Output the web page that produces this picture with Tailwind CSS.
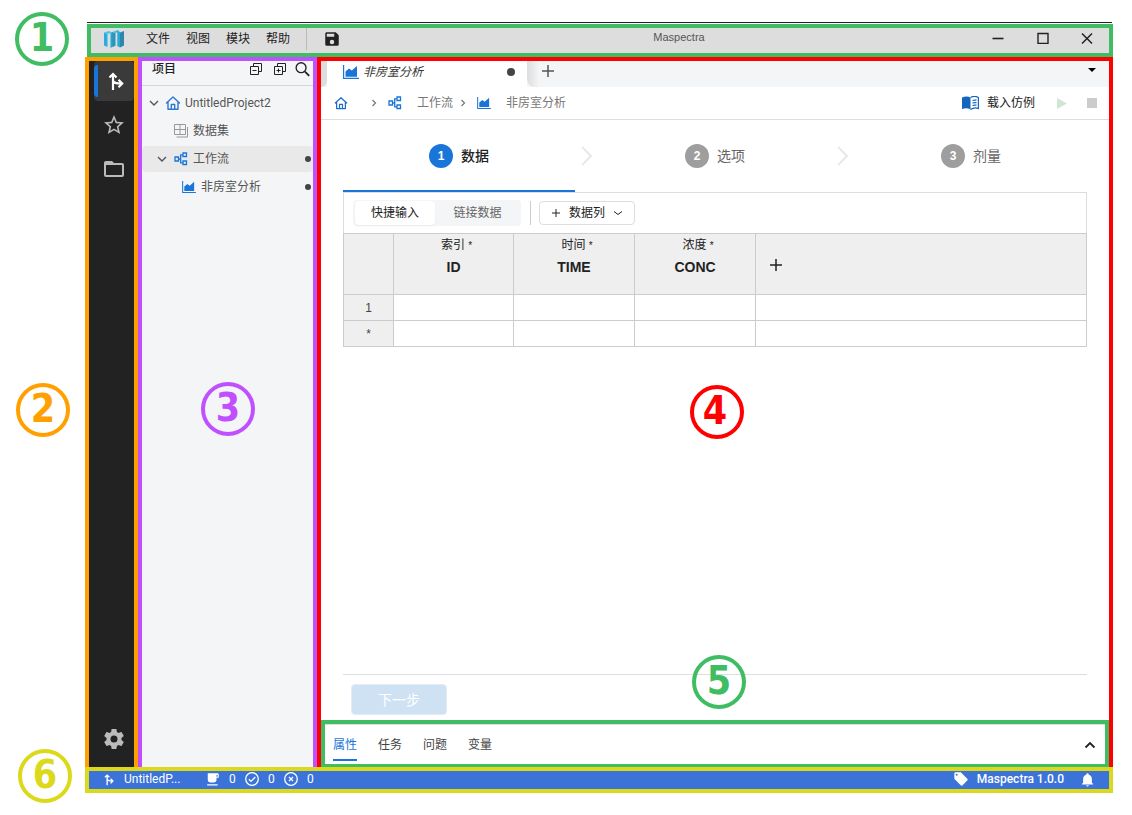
<!DOCTYPE html>
<html lang="zh-CN">
<head>
<meta charset="utf-8">
<meta name="viewport" content="width=device-width, initial-scale=1">
<title>Maspectra</title>
<script src="https://cdn.jsdelivr.net/npm/@tailwindcss/browser@4"></script>
</head>
<body class="bg-white font-['Liberation_Sans','Noto_Sans_CJK_SC',sans-serif] text-xs text-[#222]">

<svg class="hidden" aria-hidden="true">
  <symbol id="branch" viewBox="0 0 16 20"><path d="M5 19V4M1.500 6.500L5 3l3.500 3.500M5 9.500c.5 2.500 2.500 3 8 3M10.500 8.800l3.700 3.700-3.700 3.700" fill="none" stroke="currentColor" stroke-width="2.200"/></symbol>
  <symbol id="home" viewBox="0 0 16 16"><path d="M1.500 8L8 2l6.500 6M3 7v7.300h10V7M6.300 14V9.500h3.400V14" fill="none" stroke="currentColor" stroke-width="1.400" stroke-linejoin="round" stroke-linecap="round"/></symbol>
  <symbol id="flow" viewBox="0 0 14 14"><path d="M1 5h3.500v4H1zM9 1h3.500v3.500H9zM9 9h3.500v3.500H9zM4.500 7h2M9 2.800H6.700v8H9" fill="none" stroke="currentColor" stroke-width="1.300"/></symbol>
  <symbol id="chart" viewBox="0 0 16 14"><path d="M.6 0v13.400H16" fill="none" stroke="currentColor" stroke-width="1.200"/><path d="M2.500 11.800V6.500L6 3.500l2.800 2L14 1v10.800z" fill="currentColor"/></symbol>
  <symbol id="down" viewBox="0 0 12 12"><path d="M2 4l4 4 4-4" fill="none" stroke="currentColor" stroke-width="1.400"/></symbol>
  <symbol id="right" viewBox="0 0 12 12"><path d="M4.500 3l3 3-3 3" fill="none" stroke="currentColor" stroke-width="1.200"/></symbol>
  <symbol id="plus" viewBox="0 0 12 12"><path d="M6 0v12M0 6h12" fill="none" stroke="currentColor" stroke-width="1.500"/></symbol>
  <symbol id="step" viewBox="0 0 24 24"><path d="M7 3l9 9-9 9" fill="none" stroke="currentColor" stroke-width="2"/></symbol>
</svg>

<div class="relative flex min-h-screen flex-col pt-[22px] pr-[19px] pb-[22px] pl-[85px]">

  <header class="ml-0.5 flex flex-col">
    <div class="mr-px h-px bg-[#222]"></div>
    <div class="mt-px flex h-[33px] items-stretch border-4 border-[#40bc63] bg-[#ddd]">
      <svg class="mt-0.5 ml-[13px] h-[18px] w-5 shrink-0" viewBox="0 0 20 18" aria-label="Maspectra">
        <path d="M0 2.500L3.500 4v13L0 15.500z" fill="#27aee0"/><path d="M0 2.500L5 1l3 1.500L3.500 4z" fill="#4cc4ea"/>
        <path d="M6.500 3L9 1.800v14.700L6.500 18z" fill="#1fa8d4"/><path d="M8.500 2L11.500 3v12.800L8.500 17z" fill="#3192b8"/>
        <path d="M8.500 2L14 0l1.500 1.500-4 1.500z" fill="#38bde5"/>
        <path d="M13.300 1L16 2v15.500l-2.700-1.500z" fill="#28a9d6"/><path d="M16 2.500L20 1v14.500l-4 2z" fill="#2d86ac"/>
      </svg>
      <nav class="ml-[22px] flex items-center gap-4 pb-1">
        <button type="button">文件</button><button type="button">视图</button><button type="button">模块</button><button type="button">帮助</button>
      </nav>
      <div class="ml-4 h-[22px] w-px bg-[#bbb]"></div>
      <button type="button" aria-label="保存" class="ml-4 flex items-center pb-1"><svg class="size-[18px]" viewBox="0 0 24 24"><path fill="currentColor" d="M15,9H5V5H15M12,19A3,3 0 0,1 9,16A3,3 0 0,1 12,13A3,3 0 0,1 15,16A3,3 0 0,1 12,19M17,3H5C3.89,3 3,3.9 3,5V19A2,2 0 0,0 5,21H19A2,2 0 0,0 21,19V7L17,3Z"/></svg></button>
      <h1 class="flex-1 pl-[42px] text-center text-[11px] leading-[18px] text-[#555]">Maspectra</h1>
      <div class="flex shrink-0 items-center pb-1.5">
        <button type="button" aria-label="最小化" class="flex w-[45px] justify-center"><svg class="size-3" viewBox="0 0 12 12"><path d="M.5 6.500h11" stroke="#222" stroke-width="1.600"/></svg></button>
        <button type="button" aria-label="最大化" class="flex w-[45px] justify-center"><svg class="size-3" viewBox="0 0 12 12"><path d="M1 1.500h10v10H1z" fill="none" stroke="#222" stroke-width="1.400"/></svg></button>
        <button type="button" aria-label="关闭" class="flex w-11 justify-center"><svg class="size-3" viewBox="0 0 12 12"><path d="M1 1.500l10 10M11 1.500l-10 10" stroke="#222" stroke-width="1.500"/></svg></button>
      </div>
    </div>
  </header>

  <div class="flex flex-1 items-stretch">
    <!-- activity rail -->
    <nav class="flex w-[53px] shrink-0 flex-col items-center border-4 border-b-0 border-[#ffa000] bg-[#222] pl-1 text-[#bbb]">
      <button type="button" aria-label="项目" class="flex h-10 w-10 items-center rounded bg-[#3a3a3a] text-white"><span class="h-8 w-1 rounded-l-sm bg-[#1976d8]"></span><svg class="ml-2.5 h-5 w-4"><use href="#branch"/></svg></button>
      <button type="button" aria-label="收藏" class="mt-3 size-6"><svg viewBox="0 0 24 24"><path fill="currentColor" d="M12,15.39L8.24,17.66L9.23,13.38L5.91,10.5L10.29,10.13L12,6.09L13.71,10.13L18.09,10.5L14.77,13.38L15.76,17.66M22,9.24L14.81,8.63L12,2L9.19,8.63L2,9.24L7.45,13.97L5.82,21L12,17.27L18.18,21L16.54,13.97L22,9.24Z"/></svg></button>
      <button type="button" aria-label="文件夹" class="mt-5 size-6"><svg viewBox="0 0 24 24"><path fill="currentColor" d="M20,18H4V8H20M20,6H12L10,4H4C2.89,4 2,4.89 2,6V18A2,2 0 0,0 4,20H20A2,2 0 0,0 22,18V8C22,6.89 21.1,6 20,6Z"/></svg></button>
      <button type="button" aria-label="设置" class="mt-auto mb-4 size-6"><svg viewBox="0 0 24 24"><path fill="currentColor" d="M12,15.5A3.5,3.5 0 0,1 8.5,12A3.5,3.5 0 0,1 12,8.500A3.5,3.5 0 0,1 15.5,12A3.5,3.5 0 0,1 12,15.5M19.43,12.97C19.47,12.65 19.5,12.33 19.5,12C19.5,11.67 19.47,11.34 19.43,11L21.54,9.37C21.73,9.22 21.78,8.95 21.66,8.73L19.66,5.27C19.54,5.05 19.27,4.96 19.05,5.05L16.56,6.05C16.04,5.66 15.5,5.32 14.87,5.07L14.5,2.42C14.46,2.18 14.25,2 14,2H10C9.75,2 9.54,2.18 9.5,2.42L9.13,5.07C8.5,5.32 7.96,5.66 7.44,6.05L4.95,5.05C4.73,4.96 4.46,5.05 4.34,5.27L2.34,8.73C2.21,8.95 2.27,9.22 2.46,9.37L4.57,11C4.53,11.34 4.5,11.67 4.5,12C4.5,12.33 4.53,12.65 4.57,12.97L2.46,14.63C2.27,14.78 2.21,15.05 2.34,15.27L4.34,18.73C4.46,18.95 4.73,19.03 4.95,18.95L7.44,17.94C7.96,18.34 8.5,18.68 9.13,18.93L9.5,21.58C9.54,21.82 9.75,22 10,22H14C14.25,22 14.46,21.82 14.5,21.58L14.87,18.93C15.5,18.67 16.04,18.34 16.56,17.94L19.05,18.95C19.27,19.03 19.54,18.95 19.66,18.73L21.66,15.27C21.78,15.05 21.73,14.78 21.54,14.63L19.43,12.97Z"/></svg></button>
    </nav>

    <!-- project tree -->
    <aside class="w-[179px] shrink-0 border-4 border-b-0 border-[#c050ff] bg-[#f4f5f7] text-[#555]">
      <div class="flex h-[25px] items-start border-b border-[#d5d5d5] pl-2.5 text-[#222]">
        <h2 class="mr-auto leading-4 font-medium">项目</h2>
        <button type="button" aria-label="全部折叠" class="mt-0.5 mr-3"><svg class="size-3" viewBox="0 0 12 12"><path d="M.5 3.500h8v8h-8zM3.500 3.500v-3h8v8h-3M2.500 7.500h4" fill="none" stroke="currentColor"/></svg></button>
        <button type="button" aria-label="全部展开" class="mt-0.5 mr-2"><svg class="size-3" viewBox="0 0 12 12"><path d="M.5 3.500h8v8h-8zM3.500 3.500v-3h8v8h-3M2.500 7.500h4M4.500 5.500v4" fill="none" stroke="currentColor"/></svg></button>
        <button type="button" aria-label="搜索" class="mr-0.5"><svg class="size-[17px]" viewBox="0 0 24 24"><path d="M15.500 15l6 6" stroke="currentColor" stroke-width="2.600"/><circle cx="10" cy="9.500" r="7" fill="none" stroke="currentColor" stroke-width="1.900"/></svg></button>
      </div>
      <ul class="mt-1 flex flex-col gap-0.5">
        <li class="flex h-[26px] items-center pl-1.5"><svg class="size-3"><use href="#down"/></svg><svg class="ml-[5px] size-4 text-[#2f78cf]"><use href="#home"/></svg><span class="ml-1 font-['Roboto','Liberation_Sans',sans-serif]">UntitledProject2</span></li>
        <li class="flex h-[26px] items-center pl-8"><svg class="size-[14px] text-[#999]" viewBox="0 0 14 14"><path d="M.5 .5h11v10H.5zM6 .5v10M.5 5.500h11M2.500 13h11V3" fill="none" stroke="currentColor"/></svg><span class="ml-[5px]">数据集</span></li>
        <li class="flex h-[26px] items-center rounded bg-[#e9e9e9] pr-0.5 pl-3.5"><svg class="size-3"><use href="#down"/></svg><svg class="ml-1.5 size-[14px] text-[#1976d8]"><use href="#flow"/></svg><span class="ml-[5px]">工作流</span><span class="ml-auto size-1.5 rounded-full bg-[#444]"></span></li>
        <li class="flex h-[26px] items-center pr-0.5 pl-10"><svg class="h-3 w-[14px] text-[#1976d8]"><use href="#chart"/></svg><span class="ml-[5px]">非房室分析</span><span class="ml-auto size-1.5 rounded-full bg-[#444]"></span></li>
      </ul>
    </aside>

    <!-- editor -->
    <main class="flex min-w-0 flex-1 flex-col border-4 border-b-0 border-[#f00]">
      <div class="flex h-[26px] shrink-0 bg-[#f4f5f7]">
        <div class="w-1.5 rounded-br-md bg-[#ddd]"></div>
        <div class="flex w-[200px] items-start bg-white pt-1 pr-3 pl-4 text-[#333]">
          <svg class="h-[14px] w-4 text-[#1976d8]"><use href="#chart"/></svg><span class="ml-1 leading-[14px] italic">非房室分析</span><span class="mt-[3px] ml-auto size-2 rounded-full bg-[#444]"></span>
        </div>
        <div class="w-3 rounded-bl-lg bg-linear-to-r from-[#ddd] to-[#f4f5f7]"></div>
        <button type="button" aria-label="新建标签" class="ml-[3px] flex pt-1 text-[#555]"><svg class="size-3"><use href="#plus"/></svg></button>
        <button type="button" aria-label="标签列表" class="mr-[13px] ml-auto flex pt-[7px]"><svg class="h-1 w-2" viewBox="0 0 8 4"><path d="M0 0h8L4 4z"/></svg></button>
      </div>
      <div class="flex h-[33px] shrink-0 items-center border-b border-[#ddd] pl-[13px] text-[#777]">
        <a href="#" aria-label="主页" class="text-[#1f6cc8]"><svg class="size-[14px]"><use href="#home"/></svg></a>
        <svg class="ml-5 size-3"><use href="#right"/></svg>
        <svg class="ml-2 size-[14px] text-[#1976d8]"><use href="#flow"/></svg>
        <a href="#" class="ml-[15px]">工作流</a>
        <svg class="ml-1 size-3"><use href="#right"/></svg>
        <svg class="ml-2 h-3 w-[14px] text-[#1976d8]"><use href="#chart"/></svg>
        <a href="#" class="ml-[15px]">非房室分析</a>
        <button type="button" class="ml-auto flex items-center gap-2 text-[#222]"><svg class="h-[14px] w-[17px]" viewBox="0 0 17 14"><path d="M0 1.500C3 0 6 0 8.500 1.500v12C6 12 3 12 0 13z" fill="#1565c0"/><path d="M8.500 1.500C11 0 14 0 16.400 1.500v11C14 11.500 11 11.800 8.500 13.500M10.500 4.500c1.500-.6 2.500-.6 4-.3M10.500 7c1.500-.6 2.500-.6 4-.3M10.500 9.500c1.500-.6 2.500-.6 4-.3" fill="none" stroke="#1565c0" stroke-width="1.200"/></svg>载入仿例</button>
        <button type="button" aria-label="运行" class="ml-[22px]"><svg class="h-[11px] w-2.5" viewBox="0 0 10 11"><path d="M0 0l10 5.500L0 11z" fill="#cfe6d3"/></svg></button>
        <button type="button" aria-label="停止" class="mr-3 ml-5 size-2.5 bg-[#ccc]"></button>
      </div>

      <div class="flex flex-1 flex-col px-[22px]">
        <ol class="flex h-[72px] shrink-0 text-sm text-[#666]">
          <li class="flex flex-1 items-center justify-center gap-2 border-b-2 border-[#1976d8] pt-0.5 font-medium text-[#222]"><span class="flex size-6 items-center justify-center rounded-full bg-[#1976d8] text-xs font-bold text-white">1</span>数据</li>
          <li class="flex w-6 items-center text-[#e8e8e8]" aria-hidden="true"><svg class="size-6"><use href="#step"/></svg></li>
          <li class="flex flex-1 items-center justify-center gap-2"><span class="flex size-6 items-center justify-center rounded-full bg-[#9e9e9e] text-xs font-bold text-white">2</span>选项</li>
          <li class="flex w-6 items-center text-[#e8e8e8]" aria-hidden="true"><svg class="size-6"><use href="#step"/></svg></li>
          <li class="flex flex-1 items-center justify-center gap-2"><span class="flex size-6 items-center justify-center rounded-full bg-[#9e9e9e] text-xs font-bold text-white">3</span>剂量</li>
        </ol>

        <div class="flex h-[41px] shrink-0 items-center border border-b-0 border-[#ddd] pb-px pl-[9px]">
          <div class="flex h-[26px] rounded bg-[#f4f5f7] p-px">
            <button type="button" class="ml-px w-20 rounded bg-white shadow-xs">快捷输入</button>
            <button type="button" class="w-[85px] text-[#666]">链接数据</button>
          </div>
          <div class="ml-[9px] h-6 w-px bg-[#ccc]"></div>
          <button type="button" class="ml-2 flex h-6 w-24 items-center rounded border border-[#ddd] pl-3"><svg class="size-2"><use href="#plus"/></svg><span class="ml-[9px]">数据列</span><svg class="ml-[7px] size-3" viewBox="0 0 12 12"><path d="M2 4.500l4 3 4-3" fill="none" stroke="currentColor"/></svg></button>
        </div>
        <table class="w-full table-fixed border-collapse [&_td]:h-[26px] [&_td]:border [&_td]:border-[#ccc] [&_td]:p-0 [&_th]:border [&_th]:border-[#ccc] [&_th]:bg-[#efefef] [&_th]:p-0">
          <colgroup><col class="w-[50px]"><col class="w-[120px]"><col class="w-[121px]"><col class="w-[121px]"><col></colgroup>
          <thead>
            <tr class="h-[61px] align-top">
              <th></th>
              <th scope="col"><span class="mt-0.5 block pl-1.5 leading-[18px] font-normal">索引 <span class="text-[10px]">*</span></span><span class="mt-[3px] block text-sm leading-[18px]">ID</span></th>
              <th scope="col"><span class="mt-0.5 block pl-1.5 leading-[18px] font-normal">时间 <span class="text-[10px]">*</span></span><span class="mt-[3px] block text-sm leading-[18px]">TIME</span></th>
              <th scope="col"><span class="mt-0.5 block pl-1.5 leading-[18px] font-normal">浓度 <span class="text-[10px]">*</span></span><span class="mt-[3px] block text-sm leading-[18px]">CONC</span></th>
              <th class="align-middle"><button type="button" aria-label="添加列" class="mt-0.5 ml-3.5 flex"><svg class="size-3"><use href="#plus"/></svg></button></th>
            </tr>
          </thead>
          <tbody>
            <tr><th scope="row" class="font-normal text-[#444]">1</th><td><input aria-label="ID 1" class="block w-full"></td><td><input aria-label="TIME 1" class="block w-full"></td><td><input aria-label="CONC 1" class="block w-full"></td><td></td></tr>
            <tr><th scope="row" class="font-normal text-[#444]">*</th><td><input aria-label="ID 新行" class="block w-full"></td><td><input aria-label="TIME 新行" class="block w-full"></td><td><input aria-label="CONC 新行" class="block w-full"></td><td></td></tr>
          </tbody>
        </table>

        <div class="mt-auto border-t border-[#ddd] px-2 pt-[9px] pb-[5px]">
          <button type="button" disabled class="h-[31px] w-24 rounded border border-[#e3ecf5] bg-[#cfe2f4] text-sm text-white">下一步</button>
        </div>
      </div>

      <!-- bottom panel -->
      <section class="flex h-[47px] shrink-0 items-stretch border-4 border-b-[3px] border-[#40bc63] text-[#444]">
        <div class="flex flex-1 items-end gap-[21px] border-t border-[#ddd] pr-[9px] pb-[3px] pl-2">
          <button type="button" class="h-6 border-b-2 border-[#1976d8] pb-1.5 text-[#1976d8]">属性</button>
          <button type="button" class="h-6 pb-2">任务</button>
          <button type="button" class="h-6 pb-2">问题</button>
          <button type="button" class="h-6 pb-2">变量</button>
          <button type="button" aria-label="展开面板" class="mb-2.5 ml-auto text-[#222]"><svg class="size-3" viewBox="0 0 12 12"><path d="M1.500 8.500L6 4l4.500 4.500" fill="none" stroke="currentColor" stroke-width="1.800"/></svg></button>
        </div>
      </section>
    </main>
  </div>

  <footer class="flex h-[26px] shrink-0 items-center border-4 border-[#dcd91a] bg-[#3b73d8] pr-3.5 pb-0.5 pl-[15px] font-['Roboto','Liberation_Sans',sans-serif] text-white">
    <svg class="h-[13px] w-2.5" viewBox="0 0 16 20"><use href="#branch" width="16" height="20"/></svg>
    <span class="ml-2.5 w-[62px]">UntitledP...</span>
    <svg class="ml-5 size-[14px]" viewBox="0 0 24 24"><path fill="currentColor" d="M2,21H20V23H2M20,8H18V5H20M20,2H3V13A5,5 0 0,0 8,18H13A5,5 0 0,0 18,13V10H20A2,2 0 0,0 22,8V5C22,3.89 21.1,2 20,2Z"/></svg>
    <span class="ml-[9px] w-[7px]">0</span>
    <svg class="ml-[9px] size-[14px]" viewBox="0 0 14 14" fill="none" stroke="currentColor" stroke-width="1.300"><circle cx="7" cy="7" r="6.300"/><path d="M3.800 7.200l2.200 2.200 4.300-4.400"/></svg>
    <span class="ml-[9px] w-[7px]">0</span>
    <svg class="ml-[9px] size-[14px]" viewBox="0 0 14 14" fill="none" stroke="currentColor" stroke-width="1.300"><circle cx="7" cy="7" r="6.300"/><path d="M5 5l4 4M9 5l-4 4"/></svg>
    <span class="ml-[9px]">0</span>
    <svg class="ml-auto size-4" viewBox="0 0 24 24"><path fill="currentColor" d="M5.5,7A1.5,1.5 0 0,1 4,5.5A1.5,1.5 0 0,1 5.5,4A1.5,1.5 0 0,1 7,5.5A1.5,1.5 0 0,1 5.5,7M21.41,11.58L12.41,2.58C12.05,2.22 11.55,2 11,2H4C2.89,2 2,2.89 2,4V11C2,11.55 2.22,12.05 2.59,12.41L11.58,21.41C11.95,21.77 12.45,22 13,22C13.55,22 14.05,21.77 14.41,21.41L21.41,14.41C21.78,14.05 22,13.55 22,13C22,12.44 21.77,11.94 21.41,11.58Z"/></svg>
    <span class="ml-2 font-medium">Maspectra 1.0.0</span>
    <svg class="ml-4 size-[15px]" viewBox="0 0 24 24"><path fill="currentColor" d="M21,19V20H3V19L5,17V11C5,7.9 7.03,5.17 10,4.29C10,4.19 10,4.1 10,4A2,2 0 0,1 12,2A2,2 0 0,1 14,4C14,4.1 14,4.19 14,4.29C16.97,5.17 19,7.9 19,11V17L21,19M14,21A2,2 0 0,1 12,23A2,2 0 0,1 10,21"/></svg>
  </footer>

  <!-- callout numbers -->
  <div class="font-['DejaVu_Sans_Condensed','DejaVu_Sans',sans-serif] text-[39px] leading-none font-bold">
    <span class="absolute top-3 left-[15px] flex size-[54px] items-center justify-center rounded-full border-4 border-[#40bc63] pb-1 text-[#40bc63]">1</span>
    <span class="absolute top-[383px] left-4 flex size-[54px] items-center justify-center rounded-full border-4 border-[#ffa000] pb-1 text-[#ffa000]">2</span>
    <span class="absolute top-[382px] left-[201px] flex size-[54px] items-center justify-center rounded-full border-4 border-[#c050ff] pb-1 text-[#c050ff]">3</span>
    <span class="absolute top-[385px] left-[690px] flex size-[54px] items-center justify-center rounded-full border-4 border-[#f00] pr-1 pb-1 text-[#f00]">4</span>
    <span class="absolute top-[655px] left-[692px] flex size-[54px] items-center justify-center rounded-full border-4 border-[#40bc63] pb-1 text-[#40bc63]">5</span>
    <span class="absolute top-[749px] left-[18px] flex size-[54px] items-center justify-center rounded-full border-4 border-[#dcd91a] pb-1 text-[#dcd91a]">6</span>
  </div>
</div>
</body>
</html>
